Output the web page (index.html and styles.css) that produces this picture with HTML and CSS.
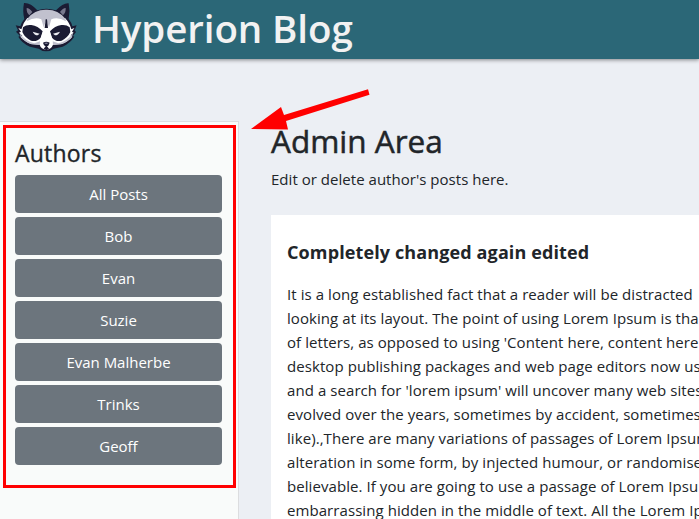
FILE: index.html
```
<!DOCTYPE html>
<html lang="en">
<head>
<meta charset="utf-8">
<title>Hyperion Blog</title>
<link rel="stylesheet" href="styles.css">
</head>
<body>
<header class="navbar">
  <svg class="logo" viewBox="45 6 186 150" aria-hidden="true">
    <path fill="#1b1b33" d="M72 9 Q92 8 112 31 Q138 22 168 31 Q190 8 206 10 Q211 34 206 57 Q215 68 217 79 L230 76 L224 91 L228 96 L219 108 L223 110 Q211 129 188 140 L161 146 Q152 154 138 154 Q126 154 116 146 L90 140 Q65 129 55 110 L60 108 L48 95 L54 91 L47 76 L61 79 Q64 68 73 57 Q67 34 72 9Z"/>
    <path fill="#77778c" d="M80 24 Q88 24 97 36 L88 46 Q79 38 80 24ZM197 24 Q189 24 180 36 L189 46 Q198 38 197 24Z"/>
    <path fill="#fff" d="M82 54 L195 54 Q210 70 214 88 L223 84 L216 95 L221 98 L212 106 L216 111 Q205 125 184 132 L159 134 Q154 148 139 149 Q123 148 119 134 L94 132 Q74 125 62 111 L67 107 L57 98 L63 95 L55 84 L64 88 Q68 70 82 54Z"/>
    <path fill="#c1c1ce" d="M82 56 Q104 28 139 29 Q174 28 196 56 L198 64 Q174 50 154 58 L147 82 L139 60 L131 82 L124 58 Q104 50 80 64Z"/>
    <path fill="#c1c1ce" d="M59 100 Q76 124 103 130 L120 124 L119 135 L94 133 Q74 126 62 111ZM219 100 Q202 124 175 130 L158 124 L159 135 L184 133 Q204 126 216 111Z"/>
    <path fill="#1b1b33" d="M69 82 Q79 73 94 75 Q114 78 128 94 L122 113 Q110 127 93 122 Q74 112 67 96ZM209 82 Q199 73 184 75 Q164 78 150 94 L156 113 Q168 127 185 122 Q204 112 211 96Z"/>
    <path fill="#1b1b33" d="M137 58 H141 L144 84 H134Z"/>
    <path fill="#fff" d="M132 86 H146 L157 118 Q159 143 139 149 Q119 143 121 118Z"/>
    <path fill="#eeeef3" d="M98 95 L119 101 L113 106 Q103 106 98 95ZM180 95 L159 101 L165 106 Q175 106 180 95Z"/>
    <path fill="#1b1b33" d="M129 128 Q139 122 149 128 L145 137 L141 139 L147 146 L139 151 L131 146 L137 139 L132 136Z"/>
    <path fill="#77778e" d="M133 129 Q139 126 145 129 L141 132 L136 132Z"/>
  </svg>
  <span class="brand">Hyperion Blog</span>
</header>
<div class="layout">
  <aside class="sidebar">
    <h2 class="side-title">Authors</h2>
    <nav class="authors">
      <a class="btn">All Posts</a>
      <a class="btn">Bob</a>
      <a class="btn">Evan</a>
      <a class="btn">Suzie</a>
      <a class="btn">Evan Malherbe</a>
      <a class="btn">Trinks</a>
      <a class="btn">Geoff</a>
    </nav>
    <div class="highlight"></div>
  </aside>
  <main class="main">
    <h1 class="page-title">Admin Area</h1>
    <p class="lead">Edit or delete author's posts here.</p>
    <article class="post">
      <h3 class="post-title">Completely changed again edited</h3>
      <p class="post-body">It is a long established fact that a reader will be distracted<br>
looking at its layout. The point of using Lorem Ipsum is tha<br>
of letters, as opposed to using 'Content here, content here<br>
desktop publishing packages and web page editors now us<br>
and a search for 'lorem ipsum' will uncover many web sites<br>
evolved over the years, sometimes by accident, sometimes<br>
like).,There are many variations of passages of Lorem Ipsum<br>
alteration in some form, by injected humour, or randomise<br>
believable. If you are going to use a passage of Lorem Ipsum<br>
embarrassing hidden in the middle of text. All the Lorem Ip</p>
    </article>
  </main>
</div>
<svg class="arrow" viewBox="0 0 130 50" aria-hidden="true">
  <path fill="#f00" d="M0 40 L30 18 L33 26 L117 .3 L118.5 5.7 L35 32 L37 40.5Z"/>
</svg>
</body>
</html>
```
FILE: styles.css
```
* { box-sizing: border-box; }
html { height: 100%; overflow: hidden; }
body {
  margin: 0;
  height: 519px;
  overflow: hidden;
  position: relative;
  display: flex;
  flex-direction: column;
  background: #eceff4;
  color: #212529;
  font-family: "Open Sans", "Noto Sans", sans-serif;
  font-size: 15px;
  line-height: 24px;
}
h1, h2, h3, p { margin: 0; white-space: nowrap; }
.navbar {
  flex: none;
  height: 59px;
  display: flex;
  align-items: flex-start;
  padding: 2px 0 0 15px;
  background: #2b6777;
  box-shadow: 0 1px 4px rgba(0, 0, 0, .45);
}
.logo { width: 62px; height: 50px; flex: none; }
.brand {
  margin-left: 15px;
  color: #f2f2f2;
  font-size: 38.5px;
  font-weight: 600;
  line-height: 53px;
  letter-spacing: -.1px;
  white-space: nowrap;
}
.layout { flex: none; display: flex; align-items: flex-start; margin-top: 62px; }
.sidebar {
  flex: none;
  position: relative;
  width: 239px;
  height: 400px;
  padding: 17px 16px 0 15px;
  background: #f9fbfa;
  border: solid #dcdddf;
  border-width: 1px 1px 0 0;
}
.side-title {
  font-size: 23px;
  font-weight: 500;
  line-height: 29px;
  margin-bottom: 7px;
  letter-spacing: .2px;
  -webkit-text-stroke: .35px currentColor;
}
.authors { display: flex; flex-direction: column; gap: 4px; }
.btn {
  height: 38px;
  line-height: 38px;
  border-radius: 4px;
  background: #6c757d;
  color: #fff;
  text-align: center;
}
.highlight {
  position: absolute;
  left: 3px;
  top: 3px;
  width: 233px;
  height: 363px;
  border: 3px solid #f00;
}
.main { flex: none; width: 440px; margin-left: 32px; }
.page-title {
  padding-top: 1px;
  font-size: 31.5px;
  font-weight: 500;
  line-height: 38px;
  margin-bottom: 7px;
  -webkit-text-stroke: .5px currentColor;
}
.lead { margin-bottom: 24px; letter-spacing: .03px; }
.post { background: #fff; height: 320px; padding: 25px 16px 0; }
.post-title { font-size: 18px; font-weight: 700; line-height: 24px; margin-bottom: 18px; letter-spacing: .12px; }
.post-body { letter-spacing: .07px; }
.arrow { position: absolute; left: 251px; top: 89px; width: 130px; height: 50px; }
```
